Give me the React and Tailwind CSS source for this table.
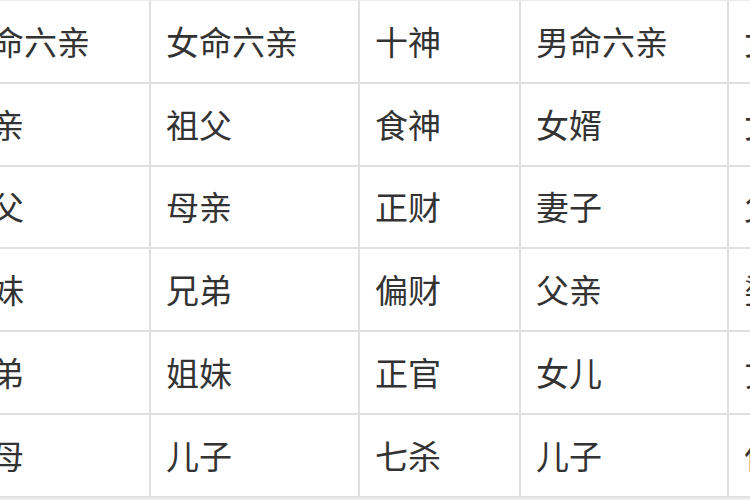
const rows = [
  ['男命六亲', '女命六亲', '十神', '男命六亲', '女命六亲'],
  ['母亲', '祖父', '食神', '女婿', '女儿'],
  ['祖父', '母亲', '正财', '妻子', '父亲'],
  ['姐妹', '兄弟', '偏财', '父亲', '婆婆'],
  ['兄弟', '姐妹', '正官', '女儿', '丈夫'],
  ['祖母', '儿子', '七杀', '儿子', '偏夫'],
];

export default function App() {
  return (
    <div className="w-[750px] h-[500px] overflow-hidden bg-[#ececec]">
      <div className="-ml-[57px] mt-px bg-white">
        {rows.map((row, i) => (
          <div key={i} className="grid grid-cols-[208px_209px_161px_208px_208px] h-[82.8px] border-b-2 border-[#e0e0e0]">
            {row.map((cell, j) => (
              <div
                key={j}
                className="flex items-center pl-[15px] border-r-2 border-[#e0e0e0] text-[33px] leading-none text-[#333] whitespace-nowrap font-['Noto_Sans_CJK_SC',sans-serif]"
              >
                {cell}
              </div>
            ))}
          </div>
        ))}
      </div>
    </div>
  );
}
